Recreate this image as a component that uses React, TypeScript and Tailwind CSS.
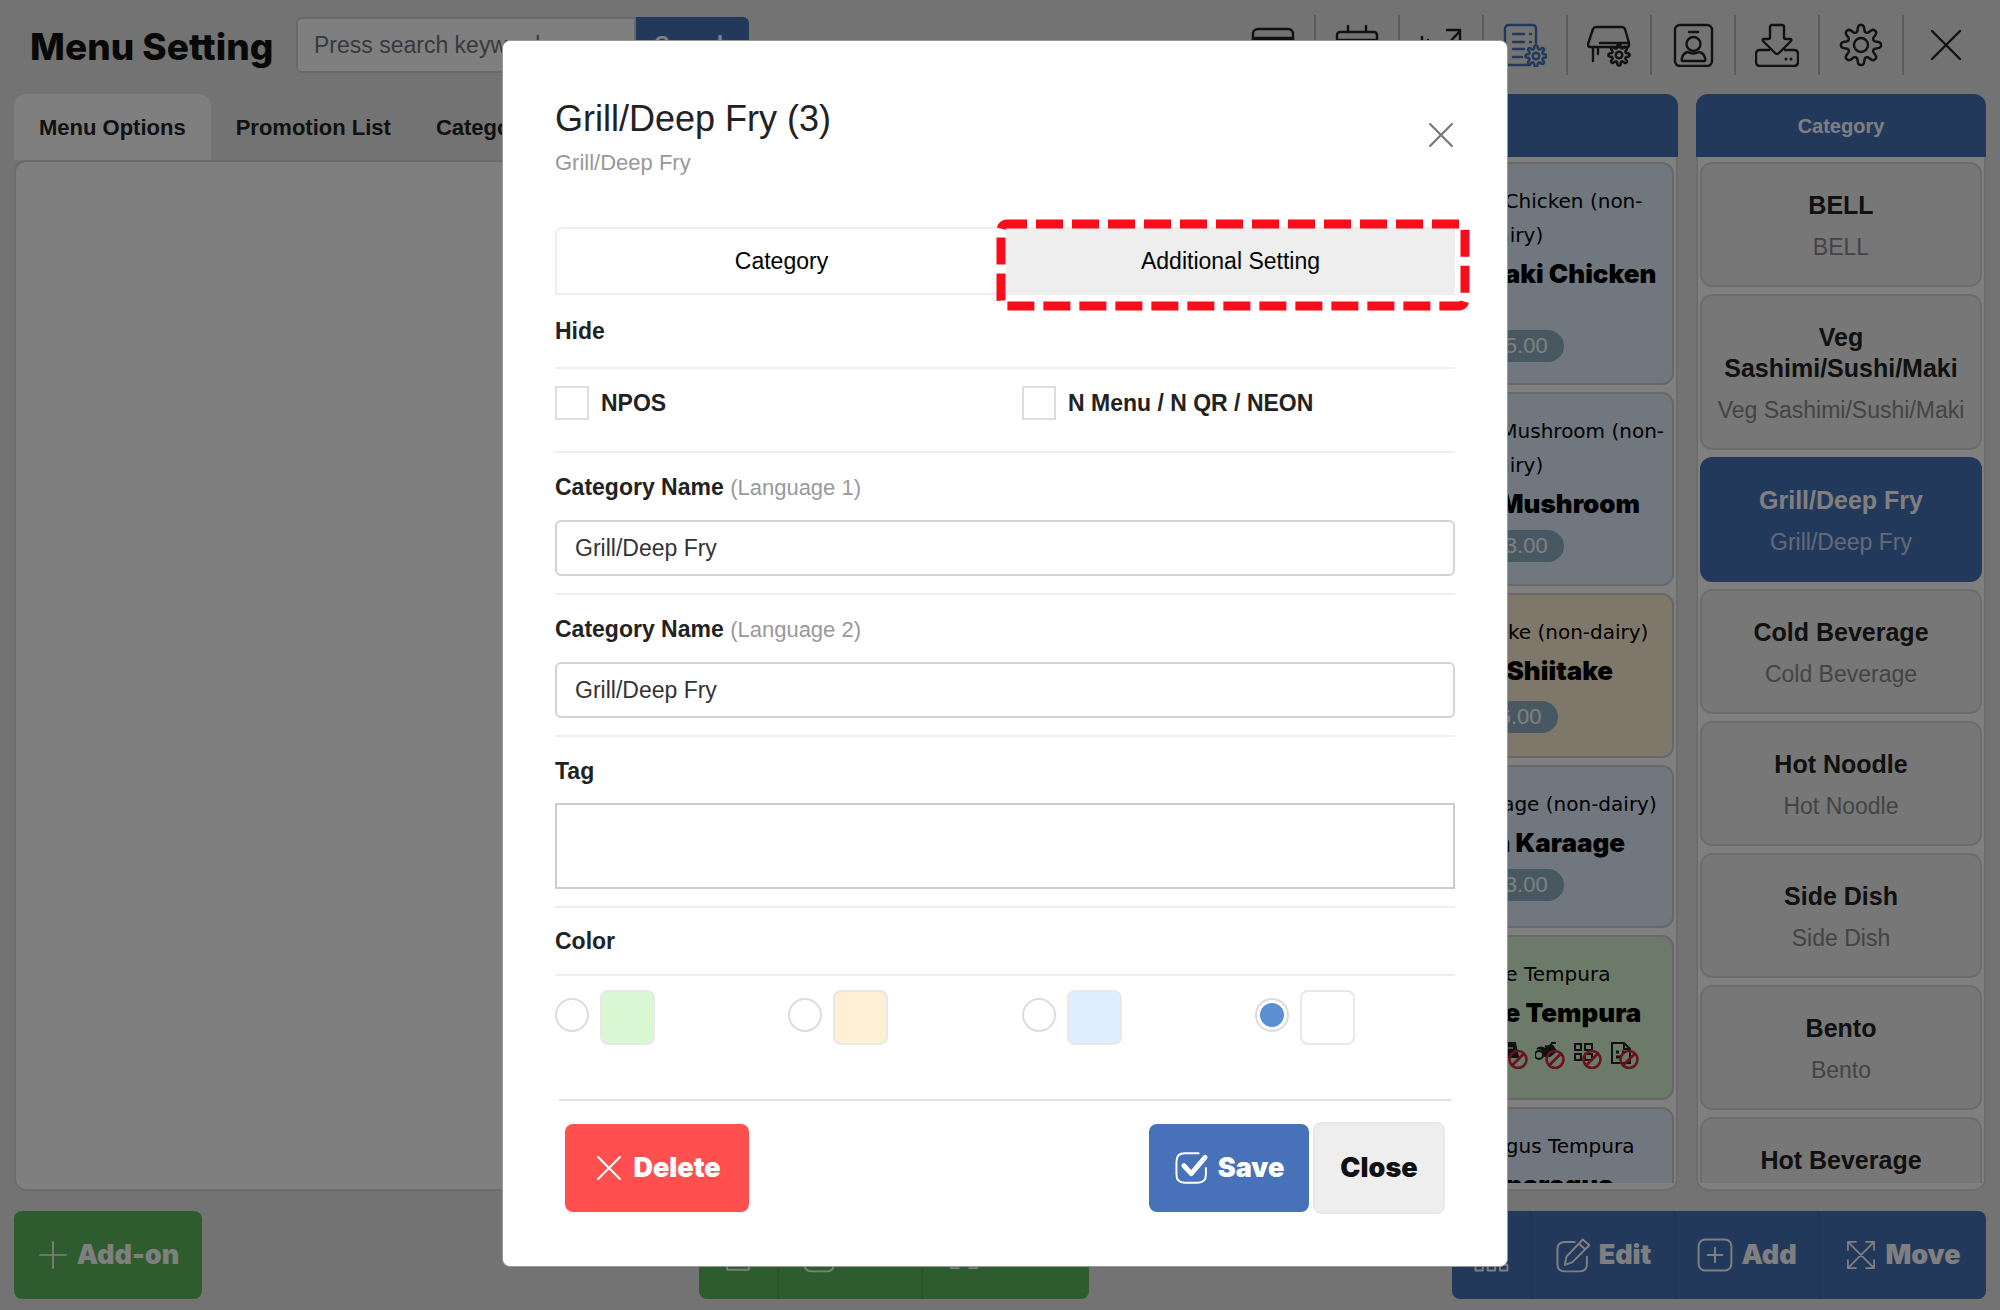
import { useState, type ReactNode } from 'react'

const tools = ['card', 'calendar', 'chart', 'menu', 'table', 'staff', 'download', 'gear', 'close']

const items = [
  { small: 'Teppanyaki Chicken (non-dairy)', big: 'Okonomiyaki Chicken', price: '$15.00', color: 'bg-[#e1eeff]', size: 'h-[223px]', gap: 'mt-9' },
  { small: 'Okonomiyaki Mushroom (non-dairy)', big: 'Teriyaki Mushroom', price: '$13.00', color: 'bg-[#e1eeff]', size: 'h-[194px]', gap: 'mt-1.5' },
  { small: 'Grilled Shiitake (non-dairy)', big: 'Grilled Shiitake', price: '$6.00', color: 'bg-[#ffefd5]', size: 'h-[165px]', gap: 'mt-2.5' },
  { small: 'Chicken Karaage (non-dairy)', big: 'Chicken Karaage', price: '$13.00', color: 'bg-[#e1eeff]', size: 'h-[163px]', gap: 'mt-1.5' },
  { small: 'Vegetable Tempura', big: 'Vegetable Tempura', price: '', color: 'bg-[#d9f7d3]', size: 'h-[165px]', gap: '' },
  { small: '4pc Asparagus Tempura', big: '4pc Asparagus', price: '', color: 'bg-[#e1eeff]', size: 'h-[165px]', gap: '' },
]

const categories = [
  'BELL',
  'Veg Sashimi/Sushi/Maki',
  'Grill/Deep Fry',
  'Cold Beverage',
  'Hot Noodle',
  'Side Dish',
  'Bento',
  'Hot Beverage',
]

const colors = [
  { name: 'Green', swatch: 'bg-[#d9f7d3]' },
  { name: 'Orange', swatch: 'bg-[#ffefd5]' },
  { name: 'Blue', swatch: 'bg-[#e1eeff]' },
  { name: 'White', swatch: 'bg-white' },
]

function Svg({ children, className = 'size-11' }: { children: ReactNode; className?: string }) {
  return (
    <svg viewBox="0 0 44 44" fill="none" stroke="currentColor" strokeWidth="2.4" strokeLinecap="round" strokeLinejoin="round" className={className}>
      {children}
    </svg>
  )
}

// Eight rounded teeth around 0,0
const cogPath =
  Array.from({ length: 160 }, (_, i) => {
    const a = (i / 160) * Math.PI * 2
    const r = 17.6 + 3.8 * Math.tanh(1.6 * Math.cos(8 * a))
    return `${i ? 'L' : 'M'}${(r * Math.cos(a)).toFixed(2)} ${(r * Math.sin(a)).toFixed(2)}`
  }).join('') + 'Z'

function SmallCog({ x, y }: { x: number; y: number }) {
  return (
    <g transform={`translate(${x} ${y}) scale(.5)`} strokeWidth="5">
      <path d={cogPath} />
      <circle r="6.5" />
    </g>
  )
}

function ToolIcon({ name }: { name: string }) {
  switch (name) {
    case 'card':
      return <Svg><rect x="2" y="6" width="40" height="32" rx="5" /><path d="M2 15h40v5H2z" fill="currentColor" /></Svg>
    case 'calendar':
      return <Svg><rect x="2" y="9" width="40" height="32" rx="3" /><path d="M13 3v6M31 3v6M2 17h40" /></Svg>
    case 'chart':
      return <Svg><path d="M3 14v27h38M9 17v2M9 31 22 18l5 5L41 8M28 7h13v13" /></Svg>
    case 'menu':
      return (
        <Svg>
          <path d="M27 42H6q-4 0-4-5V6q0-4 4-4h23q4 0 4 4v14M10 11h11M27 11h1M10 19h11M27 19h1M10 26h11M10 34h9" />
          <SmallCog x={33} y={33} />
        </Svg>
      )
    case 'table':
      return (
        <Svg>
          <path d="M9 4h26q2 0 3 2l4 14v2q0 2-2 2H3q-2 0-2-3L6 6q1-2 3-2ZM13 20h28M6 24v14M11 24v7" />
          <SmallCog x={32} y={32} />
        </Svg>
      )
    case 'staff':
      return <Svg><rect x="4" y="2" width="37" height="41" rx="5" /><path d="M18 9h9" /><circle cx="22.5" cy="21" r="7" /><path d="M12 38q-2 0-1-3 1-5 6-6 5 3 11 0 5 1 6 6 1 3-1 3Z" /></Svg>
    case 'download':
      return <Svg><path d="M17 2h10q2 0 2 2v10q0 2 2 2h4q2 0 1 2L24 30q-2 2-4 0L8 18q-1-2 1-2h4q2 0 2-2V4q0-2 2-2ZM14 27H5q-4 0-4 4v8q0 4 4 4h34q4 0 4-4v-8q0-4-4-4h-9" /><path d="M31 36h0M36 36h0" strokeWidth="3" /></Svg>
    case 'gear':
      return <Svg><g transform="translate(22 22)"><path d={cogPath} transform="scale(.95)" strokeWidth="2.6" /><circle r="7" /></g></Svg>
    default:
      return <Svg><path d="M8 8 36 36M36 8 8 36" /></Svg>
  }
}

function Blocked({ children }: { children: ReactNode }) {
  return (
    <svg viewBox="0 0 32 28" fill="none" className="h-7 w-8 shrink-0">
      <g stroke="#222" strokeWidth="2">{children}</g>
      <g stroke="#d9223c" strokeWidth="2.6">
        <circle cx="20" cy="18.5" r="8.5" />
        <path d="m14 24.5 12-12" />
      </g>
    </svg>
  )
}

function BlockedRow() {
  return (
    <span className="mt-2 flex gap-[5px]">
      <Blocked><path d="M2 3h16v16H2z" /></Blocked>
      <Blocked><path d="M2 5h16v12H2zM2 9h16" /></Blocked>
      <Blocked><path d="M5 2h10v18H5z" /></Blocked>
      <Blocked><path d="M5 2h12l3 14H5z" fill="#222" /><path d="M8 7h7" stroke="#999" /></Blocked>
      <Blocked>
        <circle cx="4" cy="14" r="4" />
        <path d="M2 8q4-3 8 0l7-4 4 6-6 5H9L7 9M10 5l4 2 3-5h4" fill="#222" />
      </Blocked>
      <Blocked><path d="M3 3h6v6H3zM13 3h7v6h-7zM3 13h6v6H3zM13 13h7v6h-7z" /></Blocked>
      <Blocked><path d="M3 2h12l6 6v14H3zM15 2v6h6" /><path d="M7 11h3M13 11h3M7 16h6" strokeWidth="3" /></Blocked>
    </span>
  )
}

function Cross({ className }: { className?: string }) {
  return <Svg className={className}><path d="M7 7 37 37M37 7 7 37" strokeWidth="3" /></Svg>
}

function EditIcon() {
  return <Svg className="size-9"><path d="M24 6H12q-9 0-9 9v18q0 9 9 9h18q9 0 9-9V24M14 24 34 3l8 7-21 21-9 3ZM29 8l8 7" /></Svg>
}

function MoveIcon() {
  return <Svg className="size-8"><path d="M4 4 40 40M40 4 4 40M4 15V4h11M29 4h11v11M40 29v11H29M15 40H4V29" /></Svg>
}

function BarButton({ children, className = '' }: { children: ReactNode; className?: string }) {
  return (
    <button type="button" className={`flex items-center justify-center gap-2 font-['Inter'] text-[27px] font-black ${className}`}>
      {children}
    </button>
  )
}

function Panel({ title, width, children }: { title: string; width: string; children: ReactNode }) {
  return (
    <section className={`flex flex-col overflow-hidden rounded-t-xl ${width}`}>
      <h2 className="flex h-[63px] shrink-0 items-center justify-center bg-[#4772b9] text-xl font-bold text-white">{title}</h2>
      <div className="flex min-h-0 flex-1 flex-col rounded-b-xl border-2 border-t-0 border-[#dadada] bg-white pb-1.5">
        {children}
      </div>
    </section>
  )
}

function Page() {
  return (
    <div className="flex h-screen flex-col bg-[#e6e6e6] px-3.5 pb-[11px] text-[#222]">
      <header className="flex h-[94px] shrink-0 items-center">
        <h1 className="ml-4 w-[266px] shrink-0 font-['Inter'] text-[37px] font-extrabold whitespace-nowrap text-[#111]">Menu Setting</h1>
        <div className="mt-[17px] flex h-14 self-start">
          <input type="text" aria-label="Search" placeholder="Press search keyword" className="w-[340px] rounded-l-md border-2 border-[#ced4da] bg-white px-4 text-[23px] placeholder:text-[#6c757d]" />
          <button type="button" className="w-[113px] rounded-r-md bg-[#4772b9] text-[23px] font-bold text-white">Search</button>
        </div>
        <nav className="-mr-0.5 ml-auto flex self-start pt-[15px]">
          {tools.map((name, i) => (
            <button
              key={name}
              type="button"
              aria-label={name}
              className={`flex h-[60px] w-[84px] items-center justify-center ${name === 'menu' ? 'text-[#4772b9]' : 'text-[#222]'} ${i < tools.length - 1 ? 'border-r-2 border-[#b8b8b8]' : ''}`}
            >
              <ToolIcon name={name} />
            </button>
          ))}
        </nav>
      </header>

      <main className="flex min-h-0 flex-1 gap-[18px]">
        <section className="flex flex-1 flex-col">
          <div className="flex h-[66px] text-[22px] font-bold">
            <button type="button" className="rounded-t-xl bg-white px-[25px]">Menu Options</button>
            <button type="button" className="px-[25px]">Promotion List</button>
            <button type="button" className="px-5">Category List</button>
          </div>
          <div className="flex-1 rounded-xl border-2 border-[#d8d8d8] bg-white" />
        </section>

        <Panel title="" width="w-[328px]">
          <ul className="flex min-h-0 flex-1 flex-col gap-[7px] overflow-hidden px-0.5 pt-[5px]">
            {items.map((item) => (
              <li key={item.small} className={`flex shrink-0 flex-col items-center rounded-xl border-2 border-[#d0d0d0] px-1 pt-5 text-center ${item.color} ${item.size}`}>
                <span className="font-['DejaVu_Sans'] text-xl leading-[34px] text-black">{item.small}</span>
                <span className="pt-0.5 font-['Inter'] text-[26px] leading-10 font-black whitespace-nowrap text-black">{item.big}</span>
                {item.price && (
                  <span className={`rounded-full bg-[#91b0c5] px-4 text-[22px] leading-8 text-white ${item.gap}`}>{item.price}</span>
                )}
                {item.big === 'Vegetable Tempura' && <BlockedRow />}
              </li>
            ))}
          </ul>
        </Panel>

        <Panel title="Category" width="w-[290px]">
          <div className="flex min-h-0 flex-1 flex-col gap-[7px] overflow-hidden px-0.5 pt-[5px]">
            {categories.map((name) => (
              <button
                key={name}
                type="button"
                className={`flex shrink-0 flex-col items-center rounded-xl border-2 pt-[26px] pb-[22px] ${name === 'Grill/Deep Fry' ? 'border-[#4772b9] bg-[#4772b9] text-white' : 'border-[#dadada] bg-[#eee]'}`}
              >
                <span className="text-[25px] leading-[31px] font-bold">{name}</span>
                <span className={`mt-[11px] text-[23px] leading-[31px] ${name === 'Grill/Deep Fry' ? 'text-[#c8d4ea]' : 'text-[#888]'}`}>{name}</span>
              </button>
            ))}
          </div>
        </Panel>
      </main>

      <footer className="mt-5 flex h-[88px] shrink-0 items-stretch text-white">
        <BarButton className="w-[188px] rounded-lg bg-[#5cb85c]">
          <Svg className="size-8"><path d="M22 4v36M4 22h36" /></Svg>
          Add-on
        </BarButton>
        <div className="mr-[363px] ml-auto flex divide-x-2 divide-[#54a954] overflow-hidden rounded-lg bg-[#5cb85c]">
          <BarButton className="w-20"><Svg className="size-9"><path d="M6 10h32l-3 30H9ZM15 10V4h14v6" /></Svg></BarButton>
          <BarButton className="w-36"><EditIcon />Edit</BarButton>
          <BarButton className="w-[166px]"><MoveIcon />Move</BarButton>
        </div>
        <div className="flex divide-x-2 divide-[#4069ac] overflow-hidden rounded-lg bg-[#4772b9]">
          <BarButton className="w-20"><Svg className="size-9"><path d="M3 34h9v7H3zM18 34h9v7h-9zM33 34h9v7h-9zM22 6v28M8 34V22h29v12" /></Svg></BarButton>
          <BarButton className="w-36"><EditIcon />Edit</BarButton>
          <BarButton className="w-36"><Svg className="size-9"><rect x="2" y="3" width="40" height="38" rx="8" /><path d="M22 13v18M13 22h18" /></Svg>Add</BarButton>
          <BarButton className="w-[166px]"><MoveIcon />Move</BarButton>
        </div>
      </footer>
    </div>
  )
}

function CategoryDialog() {
  const [color, setColor] = useState('White')
  const [names, setNames] = useState(['Grill/Deep Fry', 'Grill/Deep Fry'])

  return (
    <div role="dialog" aria-label="Grill/Deep Fry" className="mt-10 w-[1006px] self-start rounded-lg border border-[#999] bg-white px-13 pb-13 text-[#222]">
      <div className="flex justify-between pt-[54px]">
        <div>
          <h2 className="text-4xl leading-12">Grill/Deep Fry (3)</h2>
          <p className="text-[22px] leading-10 text-[#999]">Grill/Deep Fry</p>
        </div>
        <button type="button" aria-label="Close dialog" className="mt-6 -mr-0.5 size-8 text-[#777]">
          <Cross className="size-8" />
        </button>
      </div>

      <div className="mt-11 flex h-[68px] text-[23px] font-medium text-black">
        <button type="button" className="flex-1 rounded-tl-lg border-2 border-r-0 border-[#eee]">Category</button>
        <div className="relative flex-1">
          <button type="button" className="size-full bg-[#eee]">Additional Setting</button>
          <svg className="pointer-events-none absolute -top-2 -left-2.5 h-[92px] w-[474px]" fill="none">
            <rect x="5" y="5" width="464" height="82" rx="6" stroke="#f90d1b" strokeWidth="9" strokeDasharray="27 9" strokeDashoffset="7" />
          </svg>
        </div>
      </div>

      <p className="border-b-2 border-[#eee] pt-5 pb-5 text-[23px] leading-8 font-bold">Hide</p>
      <div className="grid h-[84px] grid-cols-[467px_1fr] items-start border-b-2 border-[#eee] pt-[17px] text-[23px] font-bold">
        {['NPOS', 'N Menu / N QR / NEON'].map((label) => (
          <label key={label} className="flex items-center gap-3">
            <input type="checkbox" className="size-[34px] appearance-none border-2 border-[#ddd] bg-white checked:bg-[#4772b9]" />
            {label}
          </label>
        ))}
      </div>

      {names.map((value, i) => (
        <div key={i} className="border-b-2 border-[#eee] pt-[18px] pb-[17px]">
          <label htmlFor={`name-${i}`} className="block text-[23px] leading-8 font-bold">
            Category Name <span className="text-[22px] font-normal text-[#999]">(Language {i + 1})</span>
          </label>
          <input
            id={`name-${i}`}
            type="text"
            value={value}
            onChange={(e) => setNames(names.map((n, k) => (k === i ? e.target.value : n)))}
            className="mt-4 block h-14 w-full rounded-md border-2 border-[#ced4da] px-[18px] text-[23px] text-[#333]"
          />
        </div>
      ))}

      <div className="border-b-2 border-[#eee] pt-[18px] pb-[17px]">
        <label htmlFor="tag" className="block text-[23px] leading-8 font-bold">Tag</label>
        <textarea id="tag" className="mt-4 block h-[86px] w-full resize-none border-2 border-[#ccc] p-4 text-[23px]" />
      </div>

      <p className="border-b-2 border-[#eee] pt-[17px] pb-[17px] text-[23px] leading-8 font-bold">Color</p>
      <div className="grid grid-cols-[233px_234px_233px_1fr] pt-3.5">
        {colors.map((c) => (
          <label key={c.name} className="flex items-start gap-[11px]">
            <input
              type="radio"
              name="color"
              aria-label={c.name}
              checked={color === c.name}
              onChange={() => setColor(c.name)}
              className="mt-2 size-[34px] appearance-none rounded-full border-2 border-[#ddd] bg-white bg-clip-content p-[3px] checked:bg-[#5a8fd2]"
            />
            <span className={`size-[55px] rounded-lg border-2 border-[#e8e8e8] ${c.swatch}`} />
          </label>
        ))}
      </div>

      <div className="mx-1 mt-[54px] flex items-center border-t-2 border-[#dee2e6] px-1.5 pt-[21px]">
        <BarButton className="h-[88px] w-[184px] rounded-lg bg-[#ff4f4f] text-white">
          <Cross className="size-8" />
          Delete
        </BarButton>
        <BarButton className="mr-1 ml-auto h-[88px] w-[160px] rounded-lg bg-[#4772b9] text-white">
          <Svg className="size-9"><path d="M30 4H13Q3 4 3 14v16q0 10 10 10h16q10 0 10-10V22" /><path d="m12 19 9 10L38 9" strokeWidth="6" /></Svg>
          Save
        </BarButton>
        <BarButton className="h-[92px] w-[132px] rounded-lg border-2 border-[#e8e8e8] bg-[#eee] text-[#111]">Close</BarButton>
      </div>
    </div>
  )
}

export default function App() {
  return (
    <div className="relative h-screen overflow-hidden font-['Liberation_Sans',Arial,sans-serif]">
      <Page />
      <div className="absolute inset-0 flex items-start justify-center bg-black/50 pl-2.5">
        <CategoryDialog />
      </div>
    </div>
  )
}
